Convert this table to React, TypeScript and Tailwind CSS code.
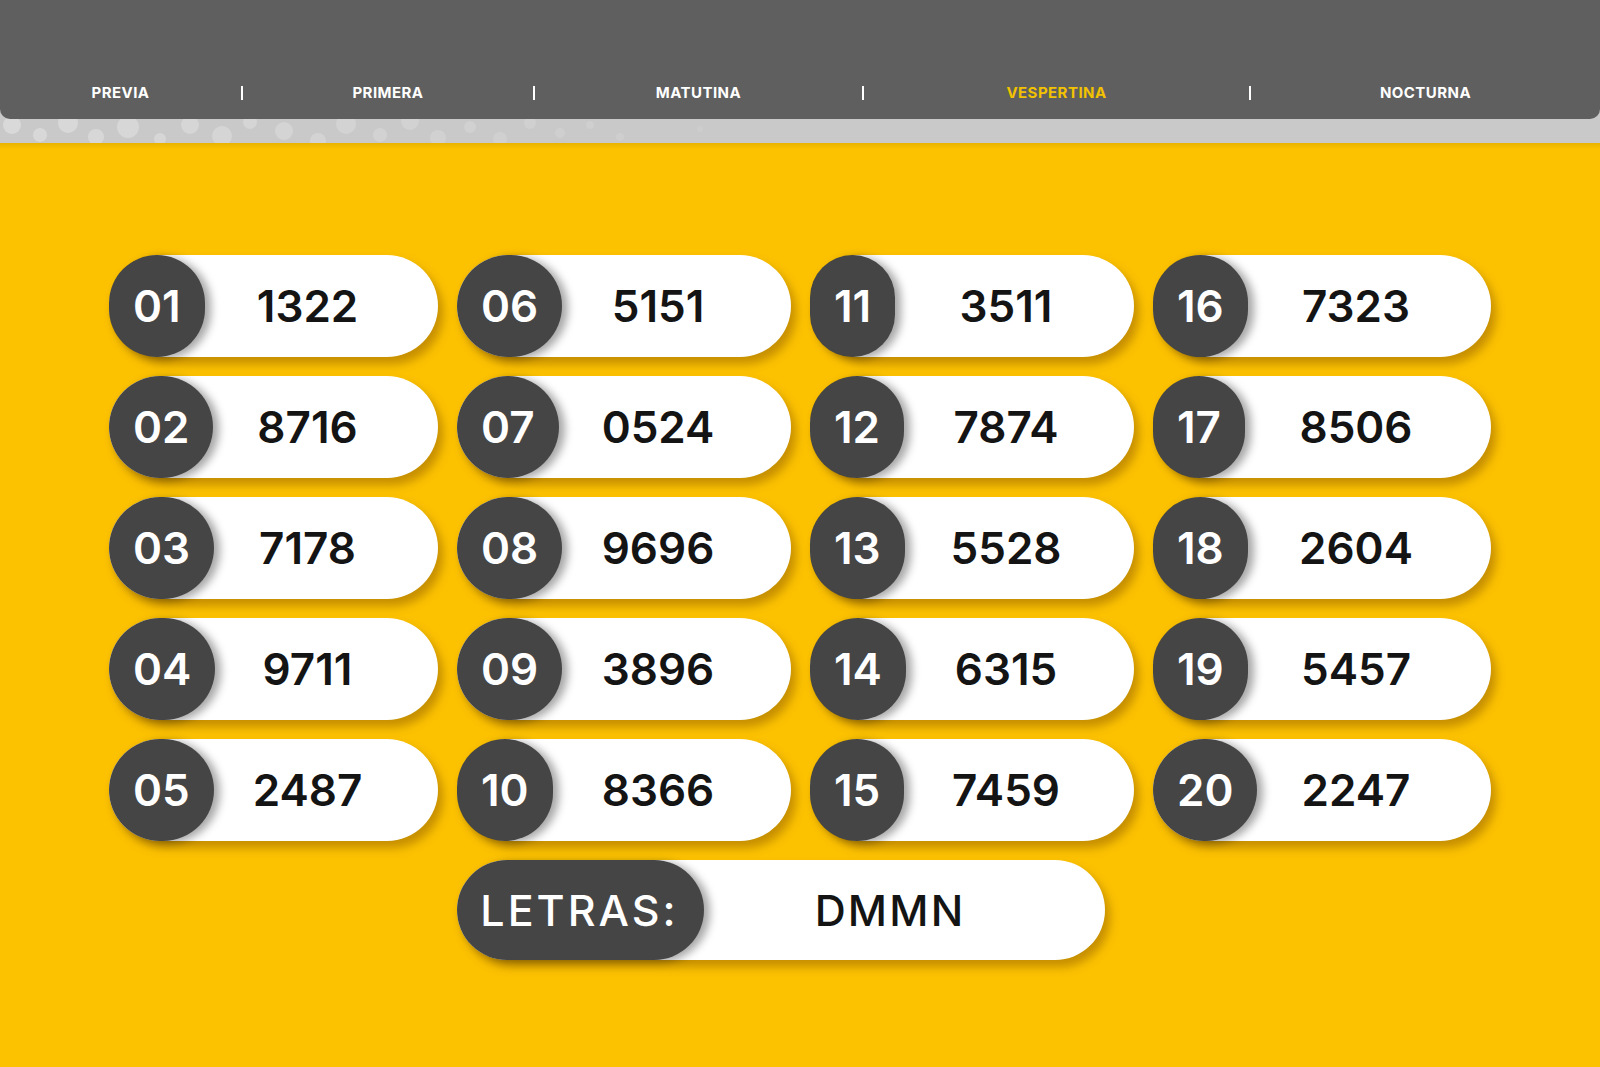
import React from "react";

const tabs = [
  { label: "PREVIA", w: "w-[241px]" },
  { label: "PRIMERA", w: "w-[290px]" },
  { label: "MATUTINA", w: "w-[327px]" },
  { label: "VESPERTINA", w: "w-[385px]", active: true },
  { label: "NOCTURNA", w: "flex-1" },
];

// numeros por columna (4 columnas x 5 filas)
const columns = [
  [["01", "1322"], ["02", "8716"], ["03", "7178"], ["04", "9711"], ["05", "2487"]],
  [["06", "5151"], ["07", "0524"], ["08", "9696"], ["09", "3896"], ["10", "8366"]],
  [["11", "3511"], ["12", "7874"], ["13", "5528"], ["14", "6315"], ["15", "7459"]],
  [["16", "7323"], ["17", "8506"], ["18", "2604"], ["19", "5457"], ["20", "2247"]],
];

const bubbles = [
  [12, 6, 9], [40, 16, 7], [68, 4, 10], [96, 18, 8], [128, 8, 11], [160, 20, 6],
  [190, 6, 9], [222, 17, 10], [250, 3, 7], [284, 12, 9], [318, 22, 8], [346, 5, 10],
  [380, 16, 7], [410, 2, 9], [438, 19, 8], [470, 8, 6], [500, 20, 7], [530, 4, 6],
  [560, 14, 5], [590, 6, 4], [620, 18, 4], [700, 10, 3],
];

const Pill = ({ n, value }: { n: string; value: string }) => (
  <div className="grid h-[102px] rounded-full bg-white shadow-[5px_7px_10px_rgba(130,80,0,0.45)]">
    <div className="col-start-1 row-start-1 flex items-center justify-center pl-[68px] text-[44px] font-semibold text-[#141414]">
      {value}
    </div>
    <div className="col-start-1 row-start-1 flex items-center justify-self-start rounded-full bg-[#454545] px-[24px] text-[44px] font-semibold text-white shadow-[6px_2px_8px_rgba(0,0,0,0.35)]">
      {n}
    </div>
  </div>
);

const App = () => {
  return (
    <div className="min-h-[1067px] bg-[#fcc200] font-['Inter',sans-serif]">
      {/* header */}
      <div className="bg-[#c9c9c9]">
        <div className="flex h-[119px] items-end rounded-b-[10px] bg-[#5f5f5f] pb-[16px]">
          {tabs.map((t, i) => (
            <React.Fragment key={t.label}>
              {i > 0 && <div className="mb-[3px] h-[14px] w-[2px] bg-white" />}
              <div
                className={`${t.w} text-center text-[15px] leading-5 font-bold tracking-[0.03em] ${
                  t.active ? "text-[#f2c200]" : "text-white"
                }`}
              >
                {t.label}
              </div>
            </React.Fragment>
          ))}
        </div>
        <svg className="block h-[24px] w-full" viewBox="0 0 1600 24" preserveAspectRatio="none">
          {bubbles.map(([x, y, r], i) => (
            <circle key={i} cx={x} cy={y} r={r} fill="#ffffff" opacity={0.3 - i * 0.01} />
          ))}
        </svg>
      </div>
      <div className="h-[6px] bg-gradient-to-b from-[#e9b300] to-[#fcc200]" />

      {/* resultados */}
      <div className="mx-auto mt-[106px] grid w-[1382px] grid-cols-[329px_334px_324px_338px] gap-x-[19px] gap-y-[19px]">
        {[0, 1, 2, 3, 4].map((row) =>
          columns.map((col) => <Pill key={col[row][0]} n={col[row][0]} value={col[row][1]} />)
        )}
        <div className="col-span-2 col-start-2 grid h-[100px] w-[648px] rounded-full bg-white shadow-[5px_7px_10px_rgba(130,80,0,0.45)]">
          <div className="col-start-1 row-start-1 flex items-center justify-center pl-[218px] text-[43px] font-medium tracking-[0.05em] text-[#141414]">
            DMMN
          </div>
          <div className="col-start-1 row-start-1 flex w-[247px] items-center justify-center justify-self-start rounded-full bg-[#454545] pr-[2px] text-[43px] font-medium tracking-[0.07em] text-white shadow-[6px_2px_8px_rgba(0,0,0,0.35)]">
            LETRAS:
          </div>
        </div>
      </div>
    </div>
  );
};

export default App;
